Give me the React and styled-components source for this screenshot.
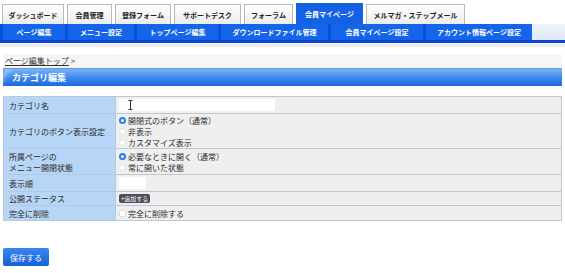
import React from "react";
import styled, { createGlobalStyle } from "styled-components";

const GlobalStyle = createGlobalStyle`
	body {
		margin: 0;
		background: #fff;
		font-family: "Noto Sans CJK JP", "Noto Sans", sans-serif;
		color: #333;
	}
`;

const Page = styled.div`
	width: 565px;
	height: 273px;
	overflow: hidden;
`;

const TabBar = styled.div`
	display: flex;
	align-items: flex-end;
	gap: 3px;
	height: 24px;
	padding-left: 2px;
`;

const Tab = styled.div`
	width: ${(p) => p.w}px;
	box-sizing: border-box;
	display: flex;
	align-items: center;
	justify-content: center;
	font-size: 7px;
	font-weight: bold;
	color: ${(p) => (p.active ? "#fff" : "#222")};
	background: ${(p) =>
		p.active ? "#1462e4" : "linear-gradient(#ffffff, #ececec)"};
	border: 1px solid ${(p) => (p.active ? "#1462e4" : "#b9b9b9")};
	border-bottom: none;
	height: ${(p) => (p.active ? 21 : 20)}px;
`;

const SubNav = styled.div`
	height: 16px;
	border-bottom: 3px solid #0a45d4;
	display: flex;
	background: linear-gradient(#eef3fb, #dfe8f6);
`;

const SubItems = styled.div`
	display: flex;
	gap: 3px;
	padding: 0 0 0 3px;
	background: #0b4ed8;
`;

const SubItem = styled.div`
	width: ${(p) => p.w}px;
	display: flex;
	align-items: center;
	justify-content: center;
	background: #1565ea;
	color: #fff;
	font-size: 7px;
	font-weight: bold;
`;

const Divider = styled.div`
	height: 3px;
	margin-top: 1px;
	background: #ececec;
`;

const Content = styled.div`
	padding: 0 3px;
`;

const Breadcrumb = styled.div`
	margin-top: 7px;
	height: 14px;
	background: #f6f6f6;
	font-size: 8px;
	line-height: 14px;
	padding-left: 2px;
	a {
		color: #333;
		text-decoration: underline;
	}
`;

const Heading = styled.div`
	height: 18px;
	background: linear-gradient(#79b4f4, #3a86ec 55%, #1f6ade);
	border-top: 1px solid #5e9ae6;
	box-sizing: border-box;
	color: #fff;
	font-size: 9px;
	font-weight: bold;
	line-height: 17px;
	padding-left: 9px;
	position: relative;
	overflow: hidden;
	&::before {
		content: "";
		position: absolute;
		left: -2px;
		top: 0;
		width: 8px;
		height: 18px;
		background: linear-gradient(90deg, rgba(255, 255, 255, 0.35), rgba(255, 255, 255, 0));
		transform: skewX(-30deg);
	}
`;

const Table = styled.div`
	margin-top: 10px;
	border-top: 1px solid #b9c9dc;
`;

const Row = styled.div`
	display: grid;
	grid-template-columns: 112px 1fr;
	min-height: ${(p) => p.h}px;
	border-bottom: 1px solid #b9c9dc;
	border-left: 1px solid #b9c9dc;
	border-right: 1px solid #b9c9dc;
	font-size: 8px;
	line-height: 11px;
	color: #2a2a2a;
`;

const Label = styled.div`
	background: #b7d5f6;
	display: flex;
	align-items: center;
	padding-left: 5px;
	border-right: 1px solid #b9c9dc;
`;

const Value = styled.div`
	background: #efefef;
	display: flex;
	flex-direction: column;
	justify-content: center;
	padding-left: 3px;
`;

const TextBox = styled.div`
	width: ${(p) => p.w}px;
	height: 12px;
	background: #fff;
	position: relative;
`;

const Cursor = styled.svg`
	position: absolute;
	left: 9px;
	top: 1px;
`;

const Option = styled.div`
	display: flex;
	align-items: center;
	gap: 2px;
`;

const Radio = styled.span`
	width: 7px;
	height: 7px;
	border-radius: 50%;
	box-sizing: border-box;
	background: #fff;
	border: ${(p) => (p.checked ? "2px solid #2b7be8" : "1px solid #e0e0e0")};
`;

const Check = styled.span`
	width: 7px;
	height: 7px;
	box-sizing: border-box;
	background: #fff;
	border: 1px solid #dcdcdc;
	border-radius: 1px;
`;

const SmallButton = styled.span`
	align-self: flex-start;
	background: #4c4c5c;
	color: #fff;
	font-size: 6px;
	line-height: 9px;
	padding: 0 2px;
	border-radius: 2px;
`;

const SaveButton = styled.button`
	margin-top: 27px;
	width: 46px;
	height: 18px;
	border: none;
	border-radius: 2px;
	background: linear-gradient(#3a86ee, #1462d8);
	color: #fff;
	font-family: "Noto Sans CJK JP", sans-serif;
	font-size: 8px;
	padding: 0;
`;

const tabs = [
	{ t: "ダッシュボード", w: 62 },
	{ t: "会員管理", w: 45 },
	{ t: "登録フォーム", w: 56 },
	{ t: "サポートデスク", w: 67 },
	{ t: "フォーラム", w: 49 },
	{ t: "会員マイページ", w: 67, active: true },
	{ t: "メルマガ・ステップメール", w: 99 },
];

const subs = [
	{ t: "ページ編集", w: 62 },
	{ t: "メニュー設定", w: 66 },
	{ t: "トップページ編集", w: 81 },
	{ t: "ダウンロードファイル管理", w: 107 },
	{ t: "会員マイページ設定", w: 92 },
	{ t: "アカウント情報ページ設定", w: 106 },
];

export default function App() {
	return (
		<Page>
			<GlobalStyle />
			<TabBar>
				{tabs.map((tab) => (
					<Tab key={tab.t} w={tab.w} active={tab.active}>
						{tab.t}
					</Tab>
				))}
			</TabBar>
			<SubNav>
				<SubItems>
					{subs.map((s) => (
						<SubItem key={s.t} w={s.w}>
							{s.t}
						</SubItem>
					))}
				</SubItems>
			</SubNav>
			<Divider />
			<Content>
				<Breadcrumb>
					<a>ページ編集トップ</a> &gt;
				</Breadcrumb>
				<Heading>カテゴリ編集</Heading>
				<Table>
					<Row h={16}>
						<Label>カテゴリ名</Label>
						<Value>
							<TextBox w={156}>
								<Cursor width="5" height="10" viewBox="0 0 5 10">
									<path d="M0.5 0.5h4M2.5 0.5v9M0.5 9.5h4" stroke="#333" strokeWidth="1" fill="none" />
								</Cursor>
							</TextBox>
						</Value>
					</Row>
					<Row h={34}>
						<Label>カテゴリのボタン表示設定</Label>
						<Value>
							<Option><Radio checked />開閉式のボタン（通常）</Option>
							<Option><Radio />非表示</Option>
							<Option><Radio />カスタマイズ表示</Option>
						</Value>
					</Row>
					<Row h={25}>
						<Label>所属ページの<br />メニュー開閉状態</Label>
						<Value>
							<Option><Radio checked />必要なときに開く（通常）</Option>
							<Option><Radio />常に開いた状態</Option>
						</Value>
					</Row>
					<Row h={16}>
						<Label>表示順</Label>
						<Value>
							<TextBox w={27} />
						</Value>
					</Row>
					<Row h={13}>
						<Label>公開ステータス</Label>
						<Value>
							<SmallButton>+追加する</SmallButton>
						</Value>
					</Row>
					<Row h={14}>
						<Label>完全に削除</Label>
						<Value>
							<Option><Check />完全に削除する</Option>
						</Value>
					</Row>
				</Table>
				<SaveButton>保存する</SaveButton>
			</Content>
		</Page>
	);
}
